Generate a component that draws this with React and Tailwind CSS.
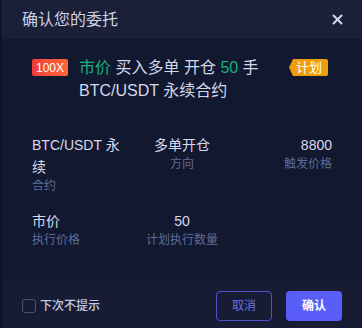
import React, { useState } from "react";

const Field = ({ value, label, align = "left" }) => {
  const alignClass =
    align === "center" ? "text-center" : align === "right" ? "text-right" : "text-left";
  return (
    <div className={alignClass}>
      <div className="text-[14px] leading-[22px] text-[#d6dbec]">{value}</div>
      <div className="text-[12px] leading-[16px] text-[#5f6d96]">{label}</div>
    </div>
  );
};

const App = () => {
  const [noRemind, setNoRemind] = useState(false);

  return (
    <div
      className="w-[362px] h-[328px] flex bg-[#0d1222] overflow-hidden"
      style={{ fontFamily: '"Liberation Sans", "Noto Sans CJK SC", sans-serif' }}
    >
      <div className="w-[2px] shrink-0 bg-[#0f1526]" />
      <div className="flex-1 min-w-0 flex flex-col bg-[#121830]">
        {/* header */}
        <div className="h-[39px] shrink-0 flex items-center justify-between pl-[20px] pr-[18px] bg-[#1b2038]">
          <span className="text-[16px] text-[#cdd2e4]">确认您的委托</span>
          <button className="w-[14px] h-[14px] flex items-center justify-center text-[#d3d8ea]">
            <svg width="11" height="11" viewBox="0 0 11 11">
              <path d="M1.5 1.5 L9.5 9.5 M9.5 1.5 L1.5 9.5" stroke="currentColor" strokeWidth="2" strokeLinecap="round" />
            </svg>
          </button>
        </div>

        {/* body */}
        <div className="flex-1 pl-[30px] pr-[30px] pt-[17px]">
          <div className="flex items-start mr-[4px]">
            <div className="h-[23px] flex items-center">
              <span className="h-[17px] w-[36px] flex items-center justify-center rounded-[2px] bg-gradient-to-r from-[#f23c3a] to-[#ff6636] text-[12px] leading-none text-white">
                100X
              </span>
            </div>
            <div className="flex-1 ml-[11px] text-[16px] leading-[23px] text-[#d4d9ea]">
              <div>
                <span className="text-[#17b07c]">市价</span> 买入多单 开仓{" "}
                <span className="text-[#17b07c]">50</span> 手
              </div>
              <div>BTC/USDT 永续合约</div>
            </div>
            <div className="h-[23px] flex items-center">
              <span className="h-[17px] flex items-center">
                <svg width="4" height="17" viewBox="0 0 4 17" className="block">
                  <path d="M4 0 L4 17 L0 8.5 Z" fill="#f09d0b" />
                </svg>
                <span className="h-[17px] pl-[3px] pr-[6px] flex items-center bg-[#f09d0b] rounded-r-[2px] text-[13px] leading-none text-white">
                  计划
                </span>
              </span>
            </div>
          </div>

          <div className="mt-[32px] grid grid-cols-3 gap-y-[16px]">
            <Field value="BTC/USDT 永续" label="合约" />
            <Field value="多单开仓" label="方向" align="center" />
            <Field value="8800" label="触发价格" align="right" />
            <Field value="市价" label="执行价格" />
            <Field value="50" label="计划执行数量" align="center" />
            <div />
          </div>
        </div>

        {/* footer */}
        <div className="h-[49px] shrink-0 flex items-start justify-between pl-[20px] pr-[20px] pt-[12px] bg-[#171c34]">
          <label className="flex items-center h-[30px] cursor-pointer">
            <span
              onClick={() => setNoRemind(!noRemind)}
              className={`w-[14px] h-[14px] rounded-[3px] border border-[#4a5478] ${noRemind ? "bg-[#5b5ef8]" : ""}`}
            />
            <span className="ml-[4px] text-[12px] font-medium text-[#c5cadf]">下次不提示</span>
          </label>
          <div className="flex gap-[14px]">
            <button className="w-[56px] h-[30px] rounded-[4px] border border-[#4d52d0] text-[12px] text-[#6b6fe6]">
              取消
            </button>
            <button className="w-[56px] h-[30px] rounded-[4px] bg-[#5a5df7] text-[12px] font-bold text-white">
              确认
            </button>
          </div>
        </div>
      </div>
    </div>
  );
};

export default App;
